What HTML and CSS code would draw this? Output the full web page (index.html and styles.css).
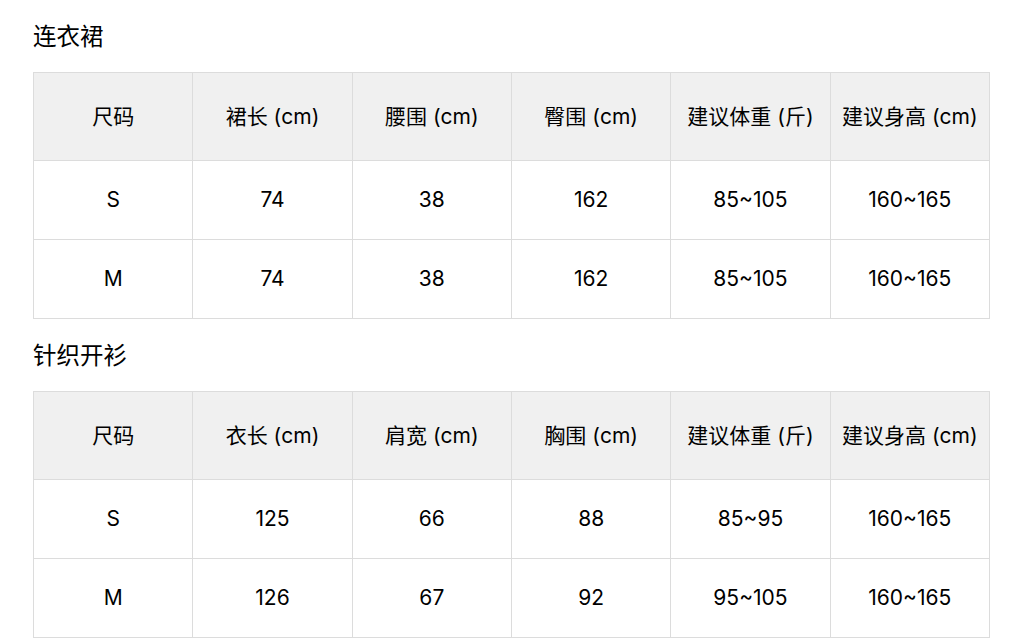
FILE: index.html
```html
<!DOCTYPE html>
<html lang="zh-CN">
<head>
<meta charset="utf-8">
<link rel="stylesheet" href="styles.css">
</head>
<body>
<section class="section">
  <h2 class="title">连衣裙</h2>
  <table class="size-table">
    <thead>
      <tr><th>尺码</th><th>裙长 (cm)</th><th>腰围 (cm)</th><th>臀围 (cm)</th><th>建议体重 (斤)</th><th>建议身高 (cm)</th></tr>
    </thead>
    <tbody>
      <tr><td>S</td><td>74</td><td>38</td><td>162</td><td>85~105</td><td>160~165</td></tr>
      <tr><td>M</td><td>74</td><td>38</td><td>162</td><td>85~105</td><td>160~165</td></tr>
    </tbody>
  </table>
</section>
<section class="section">
  <h2 class="title">针织开衫</h2>
  <table class="size-table">
    <thead>
      <tr><th>尺码</th><th>衣长 (cm)</th><th>肩宽 (cm)</th><th>胸围 (cm)</th><th>建议体重 (斤)</th><th>建议身高 (cm)</th></tr>
    </thead>
    <tbody>
      <tr><td>S</td><td>125</td><td>66</td><td>88</td><td>85~95</td><td>160~165</td></tr>
      <tr><td>M</td><td>126</td><td>67</td><td>92</td><td>95~105</td><td>160~165</td></tr>
    </tbody>
  </table>
</section>
</body>
</html>
```

FILE: styles.css
```css
html, body {
  margin: 0;
  padding: 0;
  background: #ffffff;
}
body {
  padding: 0 34px 0 33px;
  font-family: "Inter", "Noto Sans CJK SC", sans-serif;
  color: #000000;
}
.section {
  display: block;
}
.title {
  margin: 0;
  padding-top: 22px;
  height: 30px;
  line-height: 30px;
  margin-bottom: 20px;
  font-size: 23.5px;
  font-weight: 400;
}
.size-table {
  width: 100%;
  border-collapse: collapse;
  table-layout: fixed;
}
.size-table th,
.size-table td {
  border: 1px solid #dcdcdc;
  padding: 0;
  text-align: center;
  vertical-align: middle;
  font-size: 21px;
  font-weight: 400;
  white-space: nowrap;
}
.size-table th {
  background: #f0f0f0;
  height: 84px;
  padding-bottom: 3px;
}
.size-table td {
  height: 77px;
  padding-bottom: 1px;
}
```
